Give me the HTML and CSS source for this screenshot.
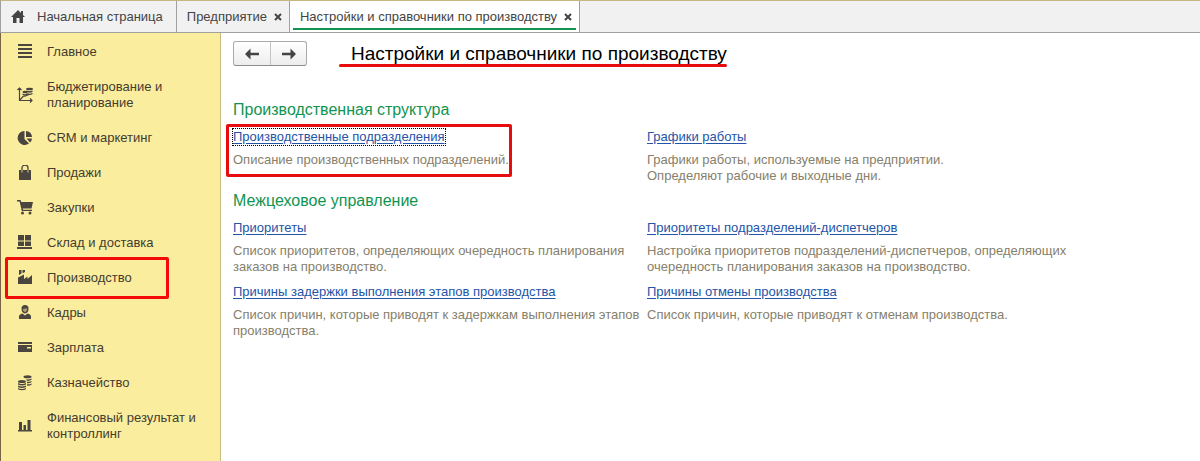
FILE: index.html
```html
<!DOCTYPE html>
<html lang="ru">
<head>
    <meta charset="UTF-8">
    <meta name="viewport" content="width=device-width, initial-scale=1.0">
    <title>Настройки и справочники по производству</title>
    <link rel="stylesheet" href="styles.css">
</head>
<body>
    <header class="tabs">
        <button class="tab tab-home" type="button">
            <svg class="home-icon" width="14" height="13" viewBox="0 0 14 13"><path d="M7 0L0 7h2v6h3.500V8h3v5H12V7h2l-2-2V1h-2v2z"/></svg>
            Начальная страница
        </button>
        <div class="tab">
            <span>Предприятие</span>
            <button class="tab-close" type="button" aria-label="Закрыть"><svg width="8" height="8" viewBox="0 0 8 8"><path d="M1 1l6 6M7 1L1 7"/></svg></button>
        </div>
        <div class="tab tab-active">
            <span>Настройки и справочники по производству</span>
            <button class="tab-close" type="button" aria-label="Закрыть"><svg width="8" height="8" viewBox="0 0 8 8"><path d="M1 1l6 6M7 1L1 7"/></svg></button>
        </div>
    </header>

    <div class="layout">
        <nav class="sidebar">
            <a class="menu-item" href="#">
                <svg class="icon" viewBox="0 0 16 16"><path d="M1 0h14v2H1zM1 4h14v2H1zM1 8h14v2H1zM1 12h14v2H1z"/></svg>
                <span>Главное</span>
            </a>
            <a class="menu-item" href="#">
                <svg class="icon" viewBox="0 0 16 16">
                    <path d="M2.500 1v12.500H15M.5 3l2-2 2 2M13 11.500l2 2-2 2M2.500 13.500L6 9.500l2.500-.5L12 7.500" fill="none" stroke="#4a453f" stroke-width="1.200"/>
                    <ellipse cx="12.500" cy="2" rx="3.500" ry="1.300"/>
                    <path d="M9.500 3.500q3 1.500 6 0v1.500q-3 1.500-6 0zM9.500 6q3 1.500 6 0v1.200q-3 1.500-6 0z"/>
                    <ellipse cx="8" cy="5" rx="2.500" ry="1.200"/>
                    <path d="M5.500 6.500q2.500 1.400 5 0v1.500q-2.500 1.400-5 0z"/>
                </svg>
                <span>Бюджетирование и планирование</span>
            </a>
            <a class="menu-item" href="#">
                <svg class="icon" viewBox="0 0 16 16"><path d="M7.500 1v8l4.500 4.500A7 7 0 1 1 7.500 1z"/><path d="M9 1a6 6 0 0 1 6 6H9z"/><path d="M9.500 8.500H15a6 6 0 0 1-2 4z"/></svg>
                <span>CRM и маркетинг</span>
            </a>
            <a class="menu-item" href="#">
                <svg class="icon" viewBox="0 0 16 16"><path d="M2 5h12v10H2z"/><path d="M5 7V3a3 3 0 0 1 6 0v4" fill="none" stroke="#4a453f" stroke-width="1.300"/><path d="M5 5v2.500M11 5v2.500" stroke="#fbed9e" stroke-width=".8"/></svg>
                <span>Продажи</span>
            </a>
            <a class="menu-item" href="#">
                <svg class="icon" viewBox="0 0 16 16"><path d="M0 0h3.500l.8 2H16l-1.500 6.500H5.800l.3 1.200H15V11H4.800L2.600 1.500H0z"/><circle cx="5.500" cy="13" r="1.500"/><circle cx="13" cy="13" r="1.500"/></svg>
                <span>Закупки</span>
            </a>
            <a class="menu-item" href="#">
                <svg class="icon" viewBox="0 0 16 16"><path d="M1 0h6v5.500H1zM8 0h6v5.500H8zM1 6.500h6V11H1zM8 6.500h6V11H8zM0 12h15v2H0z"/></svg>
                <span>Склад и доставка</span>
            </a>
            <a class="menu-item menu-item-marked" href="#">
                <svg class="icon" viewBox="0 0 16 16"><path d="M1 14V7.500l6-3V9l3.500-2.500V9L15 5v9z"/><path d="M2 0h2.500v3.500L2 5zM5.500 0H8v2L5.500 3.200z"/></svg>
                <span>Производство</span>
            </a>
            <a class="menu-item" href="#">
                <svg class="icon" viewBox="0 0 16 16"><path d="M4.500 3.500Q4.500 0 8 0t3.500 3.500Q11.500 8 8 8.500 4.500 8 4.500 3.500z"/><path d="M2 14v-2.500Q2 9.500 5.500 8.500L8 10.500l2.500-2Q14 9.500 14 11.500V14z"/><path d="M5.700 4q2.300 0 3.300-1 .5 1 1.300 1Q10 7 8 7.200 6 7 5.700 4z" fill="#a89e70"/></svg>
                <span>Кадры</span>
            </a>
            <a class="menu-item" href="#">
                <svg class="icon" viewBox="0 0 16 16"><path d="M1 2h14v2H1zM1 5h14v7H1z"/><path d="M10 7h4v1.500h-4z" fill="#fbed9e"/></svg>
                <span>Зарплата</span>
            </a>
            <a class="menu-item" href="#">
                <svg class="icon" viewBox="0 0 16 16">
                    <ellipse cx="10.500" cy="1.800" rx="4" ry="1.500"/>
                    <path d="M9 4.200q3 .8 5.500-.7v1.300q-2 1.400-4.500 1zM10 6.700q2.500.5 4.500-.7v1.300q-2 1.200-4.500.9zM10 9.300q2.500.3 4.500-.9v1.300q-2 1.200-4.500.9z"/>
                    <ellipse cx="5" cy="6.500" rx="4" ry="1.500"/>
                    <path d="M1 8.100q4 2 8 0v1.400q-4 2-8 0zM1 10.600q4 2 8 0v1.300q-4 2-8 0zM1 13q4 2 8 0v1.200q-4 2-8 0z"/>
                </svg>
                <span>Казначейство</span>
            </a>
            <a class="menu-item" href="#">
                <svg class="icon" viewBox="0 0 16 16"><path d="M2 4h3v9H2zM6.500 7h2.500v6H6.500zM10.500 2h3v11h-3zM1 12h14v1.500H1z"/></svg>
                <span>Финансовый результат и контроллинг</span>
            </a>
        </nav>

        <main class="content">
            <div class="title-bar">
                <div class="nav-buttons">
                    <button type="button" aria-label="Назад"><svg width="14" height="12" viewBox="0 0 14 12"><path d="M0 6l5.500-5.500V4.700H14v2.600H5.500v4.200z"/></svg></button>
                    <button type="button" aria-label="Вперед"><svg width="14" height="12" viewBox="0 0 14 12"><path d="M14 6L8.500.5v4.200H0v2.600h8.500v4.200z"/></svg></button>
                </div>
                <h1>Настройки и справочники по производству</h1>
            </div>

            <section>
                <h2>Производственная структура</h2>
                <div class="links">
                    <div class="link-item link-item-marked">
                        <a class="focused" href="#">Производственные подразделения</a>
                        <p>Описание производственных подразделений.</p>
                    </div>
                    <div class="link-item">
                        <a href="#">Графики работы</a>
                        <p>Графики работы, используемые на предприятии.<br>Определяют рабочие и выходные дни.</p>
                    </div>
                </div>
            </section>

            <section>
                <h2>Межцеховое управление</h2>
                <div class="links">
                    <div class="link-item">
                        <a href="#">Приоритеты</a>
                        <p>Список приоритетов, определяющих очередность планирования заказов на производство.</p>
                    </div>
                    <div class="link-item">
                        <a href="#">Приоритеты подразделений-диспетчеров</a>
                        <p>Настройка приоритетов подразделений-диспетчеров, определяющих очередность планирования заказов на производство.</p>
                    </div>
                    <div class="link-item">
                        <a href="#">Причины задержки выполнения этапов производства</a>
                        <p>Список причин, которые приводят к задержкам выполнения этапов производства.</p>
                    </div>
                    <div class="link-item">
                        <a href="#">Причины отмены производства</a>
                        <p>Список причин, которые приводят к отменам производства.</p>
                    </div>
                </div>
            </section>
        </main>
    </div>
</body>
</html>
```

FILE: styles.css
```css
* {
    box-sizing: border-box;
}

body {
    margin: 0;
    min-height: 100vh;
    display: flex;
    flex-direction: column;
    background: #fff;
    color: #444;
    font-family: "Liberation Sans", Arial, sans-serif;
    font-size: 13px;
    line-height: 16px;
}

button {
    font: inherit;
    color: inherit;
    cursor: pointer;
}

h1,
h2,
p {
    margin: 0;
    font-weight: normal;
}

/* Tabs */
.tabs {
    display: flex;
    height: 33px;
    background: #f1f1f1;
    border-top: 1px solid #c5b783;
    border-bottom: 1px solid #a0a0a0;
    border-left: 1px solid #a0a0a0;
}

.tab {
    position: relative;
    display: flex;
    align-items: center;
    gap: 7px;
    padding: 0 7px 0 10px;
    background: none;
    border: none;
    border-right: 1px solid #a0a0a0;
    white-space: nowrap;
}

.tab-home {
    gap: 12px;
    padding: 0 13px 0 10px;
}

.home-icon {
    fill: #444;
}

.tab-active {
    background: #fff;
}

.tab-active::after {
    content: "";
    position: absolute;
    left: 3px;
    right: 3px;
    bottom: 2px;
    height: 2px;
    background: #119450;
}

.tab-close {
    display: flex;
    padding: 0;
    background: none;
    border: none;
}

.tab-close path {
    stroke: #444;
    stroke-width: 2;
}

/* Sidebar */
.layout {
    display: flex;
    flex: 1;
}

.sidebar {
    flex: 0 0 221px;
    padding-top: 2px;
    background: #fbed9e;
    border-left: 1px solid #796448;
    border-right: 1px solid #c9bc80;
}

.menu-item {
    position: relative;
    display: flex;
    align-items: center;
    gap: 14px;
    padding: 9px 16px 10px;
    color: #443c30;
    text-decoration: none;
}

.menu-item-marked::after {
    content: "";
    position: absolute;
    inset: -4px 51px -3px 4px;
    border: 3px solid #f40a0a;
    border-radius: 2px;
}

.icon {
    flex: none;
    width: 16px;
    height: 16px;
    fill: #4a453f;
}

/* Content */
.content {
    flex: 1;
    padding: 8px 12px;
}

.title-bar {
    display: flex;
    align-items: center;
    gap: 44px;
    margin-bottom: 34px;
}

.nav-buttons {
    display: flex;
    border: 1px solid #ababab;
    border-bottom-color: #8c8c8c;
    border-radius: 3px;
    background: linear-gradient(#fff, #ededed);
}

.nav-buttons button {
    display: flex;
    align-items: center;
    justify-content: center;
    width: 36px;
    height: 23px;
    padding: 0;
    background: none;
    border: none;
}

.nav-buttons button + button {
    border-left: 1px solid #c4c4c4;
}

.nav-buttons svg {
    fill: #444;
}

h1 {
    position: relative;
    color: #000;
    font-size: 19px;
    line-height: 24px;
}

h1::after {
    content: "";
    position: absolute;
    left: -12px;
    right: 0;
    bottom: -1px;
    height: 3px;
    border-radius: 2px;
    background: #e80c0c;
}

h2 {
    margin-bottom: 9px;
    color: #119450;
    font-size: 16px;
    line-height: 20px;
}

section {
    margin-bottom: 7px;
}

.links {
    display: grid;
    grid-template-columns: minmax(0, 414px) minmax(0, 426px);
    row-gap: 9px;
}

.link-item {
    position: relative;
    color: #86806c;
}

.link-item a {
    display: inline-block;
    margin-bottom: 7px;
    color: #2454a8;
    text-underline-offset: 2px;
}

.link-item .focused {
    outline: 1px dotted #000;
}

.link-item-marked::after {
    content: "";
    position: absolute;
    inset: -5px 135px 7px -7px;
    border: 3px solid #e80c0c;
    border-radius: 2px;
}
```
